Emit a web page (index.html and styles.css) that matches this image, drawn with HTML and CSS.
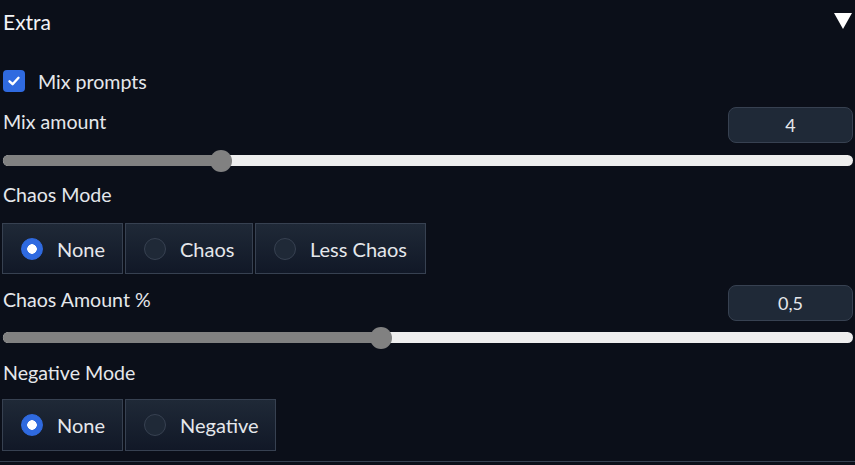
FILE: index.html
```html
<!DOCTYPE html>
<html>
<head>
<meta charset="utf-8">
<link rel="stylesheet" href="styles.css">
</head>
<body>
<div class="panel">
  <div class="header">
    <span class="title">Extra</span>
    <span class="caret"></span>
  </div>

  <label class="check-row">
    <span class="checkbox">
      <svg width="14" height="14" viewBox="0 0 14 14"><path d="M2.5 7.3 L5.6 10.2 L11.5 3.8" fill="none" stroke="#fff" stroke-width="2.4" stroke-linecap="round" stroke-linejoin="round"/></svg>
    </span>
    <span class="check-label">Mix prompts</span>
  </label>

  <div class="slider-block first">
    <div class="slider-head">
      <span class="label">Mix amount</span>
      <div class="num">4</div>
    </div>
    <div class="track"><div class="fill" style="width:218px"></div><div class="thumb" style="left:207px"></div></div>
  </div>

  <div class="radio-block">
    <div class="label">Chaos Mode</div>
    <div class="radios">
      <div class="opt w1"><span class="dot on"></span>None</div>
      <div class="opt w2"><span class="dot"></span>Chaos</div>
      <div class="opt w3"><span class="dot"></span>Less Chaos</div>
    </div>
  </div>

  <div class="slider-block second">
    <div class="slider-head">
      <span class="label">Chaos Amount %</span>
      <div class="num">0,5</div>
    </div>
    <div class="track"><div class="fill" style="width:378px"></div><div class="thumb" style="left:367px"></div></div>
  </div>

  <div class="radio-block third">
    <div class="label">Negative Mode</div>
    <div class="radios">
      <div class="opt w1"><span class="dot on"></span>None</div>
      <div class="opt w4"><span class="dot"></span>Negative</div>
    </div>
  </div>
  <div class="bottom"></div>
</div>
</body>
</html>
```
FILE: styles.css
```css
* { box-sizing: border-box; }
html, body { margin: 0; padding: 0; background: #0b0f19; }
body {
  font-family: Lato, "Liberation Sans", sans-serif;
  color: #e5e7eb;
  width: 855px;
  height: 465px;
  overflow: hidden;
}
.panel { padding: 0 2px 0 3px; display: flex; flex-direction: column; }
.header {
  height: 42px;
  display: flex;
  align-items: center;
  justify-content: space-between;
}
.title { font-size: 21px; color: #f3f4f6; }
.caret {
  width: 0; height: 0;
  border-left: 9px solid transparent;
  border-right: 9px solid transparent;
  border-top: 16px solid #ffffff;
  margin-right: 1px;
}
.check-row {
  margin-top: 28px;
  display: flex;
  align-items: center;
  height: 22px;
}
.checkbox {
  width: 22px; height: 22px;
  border-radius: 4px;
  background: #2f6ae0;
  display: flex; align-items: center; justify-content: center;
}
.check-label { margin-left: 13px; font-size: 19.6px; color: #e5e7eb; }
.label { font-size: 19.6px; color: #e5e7eb; line-height: 22px; }
.slider-block.first { margin-top: 15px; }
.slider-head {
  display: flex;
  justify-content: space-between;
  align-items: flex-start;
  height: 36px;
}
.slider-head .label { padding-top: 4px; }
.num {
  width: 125px; height: 36px;
  background: #1f2937;
  border: 1px solid #374151;
  border-radius: 8px;
  display: flex; align-items: center; justify-content: center;
  font-size: 18px; color: #e5e7eb;
}
.track {
  position: relative;
  margin-top: 12px;
  height: 11px;
  background: #eeeeee;
  border-radius: 6px;
  width: 850px;
}
.fill {
  height: 11px;
  background: #818181;
  border-radius: 6px 0 0 6px;
}
.thumb {
  position: absolute;
  top: -5.5px;
  width: 22px; height: 22px;
  border-radius: 50%;
  background: #818181;
}
.radio-block { margin-top: 18px; }
.radios { display: flex; gap: 2px; margin-top: 17px; margin-left: -1px; }
.opt {
  height: 51px;
  display: flex; align-items: center;
  padding-left: 18px;
  border: 1px solid #374151;
  background: linear-gradient(to bottom, #1f2937, #111827);
  font-size: 20px; color: #e5e7eb;
}
.w1 { width: 121px; }
.w2 { width: 128px; }
.w3 { width: 171px; }
.w4 { width: 151px; }
.dot {
  width: 22px; height: 22px;
  border-radius: 50%;
  border: 1px solid #374151;
  background: #1f2937;
  margin-right: 14px;
  flex: none;
}
.dot.on {
  border-color: #2f6ae0;
  background: radial-gradient(circle, #ffffff 0 4.5px, #2f6ae0 5px);
}
.slider-block.second { margin-top: 11px; }
.slider-block.second .track { margin-top: 11px; }
.radio-block.third { margin-top: 19px; }
.radio-block.third .radios { margin-top: 15px; height: 52px; }
.radio-block.third .opt { height: 52px; }
.bottom { margin-top: 10px; height: 1px; background: #374151; margin-left: -3px; margin-right: -2px; }
```
